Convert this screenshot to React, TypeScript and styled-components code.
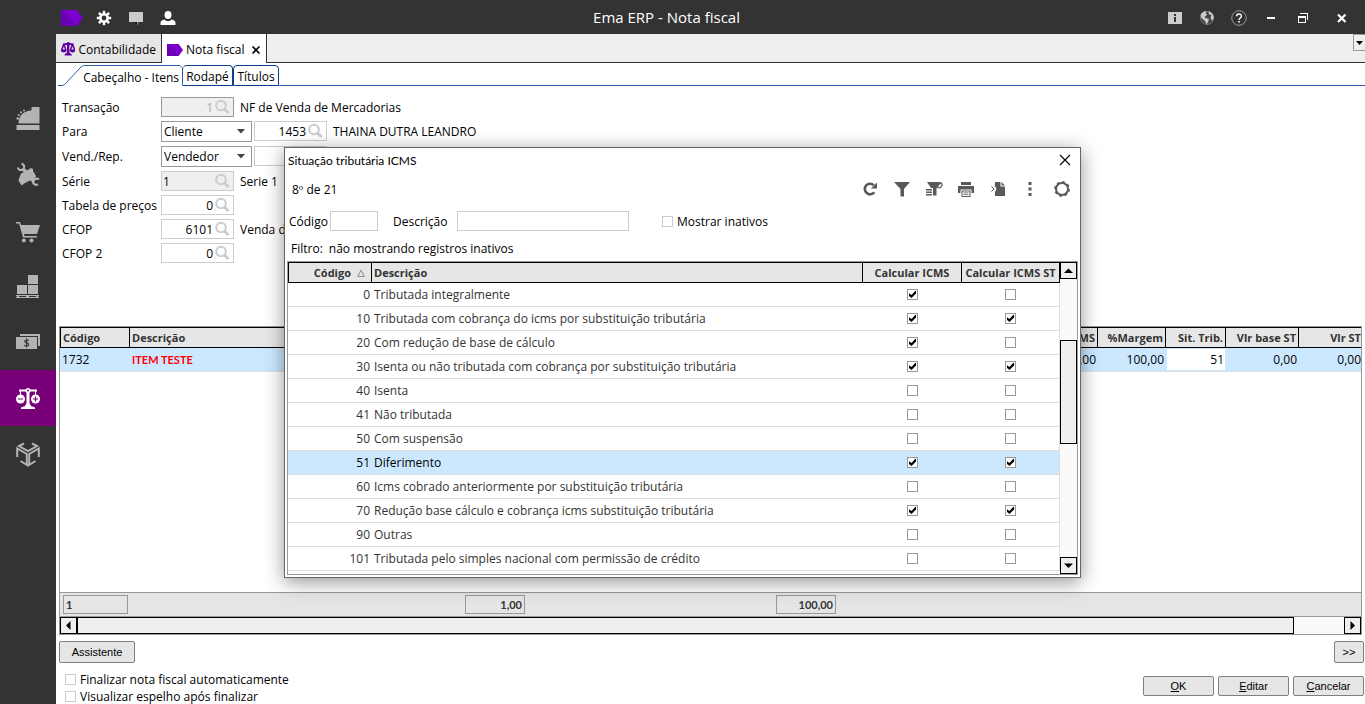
import React, { useState } from "react";
import styled, { createGlobalStyle } from "styled-components";

const GlobalStyle = createGlobalStyle`
  *, *::before, *::after { box-sizing: border-box; }
  body { margin: 0; background: #fff; }
  body, button, input, select, output {
    font-family: "Open Sans", "Liberation Sans", sans-serif;
    font-size: 12px;
    line-height: 15px;
    color: #000;
  }
  button { cursor: pointer; }
`;

const App_ = styled.div`
  position: relative;
  display: flex;
  flex-direction: column;
  min-height: 100vh;
  overflow: hidden;
`;

/* ---------- title bar ---------- */

const TitleBar = styled.header`
  display: flex;
  height: 34px;
  padding-left: 56px;
  background: #333;
`;

const BarButton = styled.button<{ $width?: number }>`
  display: flex;
  align-items: center;
  justify-content: center;
  width: ${(p) => p.$width ?? 32}px;
  height: 34px;
  padding: 2px 0 0;
  border: 0;
  background: none;
`;

const WindowTitle = styled.h1`
  flex: 1;
  margin: 0;
  padding-right: 10px;
  color: #fff;
  font-size: 15px;
  font-weight: 400;
  line-height: 35px;
  text-align: center;
`;

/* ---------- side navigation ---------- */

const Body = styled.div`
  display: flex;
  flex: 1;
`;

const SideNav = styled.nav`
  flex: none;
  width: 56px;
  padding-top: 56px;
  background: #333;
`;

const SideButton = styled.button<{ $active?: boolean }>`
  display: flex;
  align-items: center;
  justify-content: center;
  width: 56px;
  height: 56px;
  padding: 0;
  border: 0;
  background: ${(p) => (p.$active ? "#780078" : "none")};
  color: ${(p) => (p.$active ? "#fff" : "#b3b3b3")};
`;

const Main = styled.main`
  display: flex;
  flex: 1;
  flex-direction: column;
  min-width: 0;
`;

/* ---------- document tabs ---------- */

const DocTabs = styled.div`
  display: flex;
  height: 29px;
  border-bottom: 1px solid #333;
  background: #efefef;
`;

const DocTab = styled.div<{ $active?: boolean; $width: number }>`
  display: flex;
  align-items: center;
  gap: 3px;
  width: ${(p) => p.$width}px;
  height: ${(p) => (p.$active ? 29 : 28)}px;
  padding: 2px 5px 0;
  border-right: 1px solid #333;
  background: ${(p) => (p.$active ? "#fff" : "#e6e6e6")};
`;

const PlainButton = styled.button`
  display: flex;
  align-items: center;
  padding: 0;
  border: 0;
  background: none;
  white-space: nowrap;
`;

const TabClose = styled(PlainButton)`
  margin-left: auto;
`;

const TabsMenu = styled.button`
  display: flex;
  align-items: center;
  justify-content: center;
  width: 12px;
  height: 17px;
  margin-left: auto;
  padding: 0;
  border: 1px solid #999;
  border-right: 0;
  background: #efefef;
`;

/* ---------- page tabs ---------- */

const PageTabs = styled.div`
  display: flex;
  height: 23px;
  padding: 2px 0 0 2px;
`;

const ActivePageTab = styled.button`
  position: relative;
  width: 125px;
  height: 21px;
  padding: 3px 4px 0 0;
  border: 0;
  background: none;
  text-align: right;
  white-space: nowrap;
  svg {
    position: absolute;
    inset: 0;
  }
`;

const PageTab = styled.button<{ $width: number }>`
  width: ${(p) => p.$width}px;
  height: 21px;
  padding: 2px 0 0;
  border: 1px solid #0b3d91;
  border-left-width: ${(p) => (p.$width > 48 ? 0 : 1)}px;
  border-radius: 4px 4px 0 0;
  background: #fff;
  text-align: center;
`;

const PageTabsLine = styled.div`
  flex: 1;
  border-bottom: 1px solid #2f5fa8;
`;

/* ---------- header form ---------- */

const Form = styled.form`
  padding: 11px 6px 59px;
`;

const FormRow = styled.div<{ $height?: number }>`
  display: flex;
  height: ${(p) => p.$height ?? 24}px;
`;

const FormLabel = styled.label`
  width: 99px;
  padding-top: 3px;
  white-space: nowrap;
`;

const SearchBox = styled.span<{ $tone?: "locked" | "readonly" }>`
  display: flex;
  flex: none;
  align-items: center;
  width: 73px;
  height: 20px;
  padding-right: 2px;
  border: 1px solid ${(p) => (p.$tone === "locked" ? "#999" : "#ccc")};
  background: ${(p) => (p.$tone ? "#efefef" : "#fff")};
`;

const SearchInput = styled.input<{ $left?: boolean; $dim?: boolean }>`
  width: 52px;
  padding: 0 1px;
  border: 0;
  outline: 0;
  background: none;
  color: ${(p) => (p.$dim ? "#b0a8a0" : "#000")};
  text-align: ${(p) => (p.$left ? "left" : "right")};
`;

const SearchButton = styled(PlainButton)`
  flex: none;
  width: 16px;
`;

const RowText = styled.span`
  padding: 3px 0 0 6px;
  white-space: nowrap;
`;

const SelectBox = styled.span`
  position: relative;
  flex: none;
  width: 90px;
  height: 21px;
  margin-right: 3px;
  svg {
    position: absolute;
    top: 8px;
    right: 6px;
    pointer-events: none;
  }
`;

const Select = styled.select`
  width: 91px;
  height: 21px;
  padding: 0 2px;
  border: 1px solid #999;
  border-radius: 0;
  background: #fff;
  appearance: none;
`;

/* ---------- data grids ---------- */

const Grid = styled.section`
  display: flex;
  flex: 1;
  flex-direction: column;
  margin: 0 3px;
  border: 1px solid #999;
  overflow: hidden;
`;

const GridBody = styled.div`
  flex: 1;
`;

const Table = styled.table`
  width: 100%;
  border-collapse: separate;
  border-spacing: 0;
  table-layout: fixed;
`;

const Th = styled.th<{ $align?: string; $width?: number }>`
  width: ${(p) => (p.$width ? `${p.$width}px` : "auto")};
  height: 21px;
  padding: 0 2px;
  border: solid #000;
  border-width: 1px 1px 1px 0;
  background: #e6e6e6;
  color: #333;
  font-family: "Open Sans", "Liberation Sans", sans-serif;
  font-size: 11px;
  font-weight: 700;
  text-align: ${(p) => p.$align ?? "left"};
  white-space: nowrap;
  &:first-child { border-left-width: 1px; }
`;

const ItemTh = styled(Th)`
  &:last-child { border-right: 0; padding-right: 0; }
`;

const ItemTd = styled.td<{ $align?: string; $editing?: boolean; $alert?: boolean }>`
  height: 24px;
  padding: 0 2px;
  border-bottom: 1px solid #ddd;
  background: ${(p) => (p.$editing ? "#fff" : "#cce8ff")};
  box-shadow: ${(p) => (p.$editing ? "inset 1px 1px 0 #cce8ff, inset -1px -1px 0 #cce8ff" : "none")};
  color: ${(p) => (p.$alert ? "#f00" : "#000")};
  text-align: ${(p) => p.$align ?? "left"};
  white-space: nowrap;
  &:last-child { padding-right: 0; }
  strong {
    font-family: Lato, "Liberation Sans", sans-serif;
    font-size: 11px;
  }
`;

const Totals = styled.div`
  display: flex;
  align-items: center;
  height: 25px;
  padding: 0 3px;
  border: solid #999;
  border-width: 1px 0;
  background: #e5e5e5;
`;

const Total = styled.output<{ $width: number; $gap?: number; $align?: string }>`
  width: ${(p) => p.$width}px;
  height: 19px;
  margin-left: ${(p) => p.$gap ?? 0}px;
  padding: 1px 2px;
  border: 1px solid #999;
  color: #333;
  font-family: Lato, "Liberation Sans", sans-serif;
  font-size: 11px;
  font-weight: 700;
  text-align: ${(p) => p.$align ?? "right"};
`;

const trackPattern = "repeating-conic-gradient(#f4f4f4 0 25%, #fff 0 50%) 0 0 / 2px 2px";

const HScroll = styled.div`
  display: flex;
  height: 17px;
  background: ${trackPattern};
`;

const VScroll = styled.div`
  display: flex;
  flex: none;
  flex-direction: column;
  width: 17px;
  background: ${trackPattern};
`;

const ScrollArrow = styled.button`
  display: flex;
  flex: none;
  align-items: center;
  justify-content: center;
  width: 17px;
  height: 17px;
  padding: 0;
  border: 1px solid #000;
  background: #efefef;
`;

const HThumb = styled.div`
  flex: 1;
  margin-right: 50px;
  border: 1px solid #000;
  background: #efefef;
`;

const VThumb = styled.div`
  height: 104px;
  margin: 61px 0 auto;
  border: 1px solid #000;
  background: #efefef;
`;

/* ---------- footer ---------- */

const ActionRow = styled.div`
  display: flex;
  justify-content: space-between;
  padding: 6px 1px 0 3px;
`;

const PushButton = styled.button<{ $width: number; $height?: number }>`
  width: ${(p) => p.$width}px;
  height: ${(p) => p.$height ?? 22}px;
  padding: 0;
  border: 1px solid #808080;
  border-radius: 2px;
  background: #e6e6e6;
  font-family: "Liberation Sans", Arial, sans-serif;
  font-size: 11px;
`;

const FooterRow = styled.footer`
  display: flex;
  align-items: flex-end;
  justify-content: space-between;
  padding: 9px 1px 0 9px;
`;

const CheckList = styled.div`
  display: flex;
  flex-direction: column;
  gap: 2px;
`;

const CheckLabel = styled.label`
  display: flex;
  align-items: center;
  gap: 4px;
  height: 15px;
  white-space: nowrap;
`;

const Check = styled.input<{ $light?: boolean }>`
  display: block;
  flex: none;
  width: 11px;
  height: 11px;
  margin: 0;
  border: 1px solid ${(p) => (p.$light ? "#ccc" : "#999")};
  background: #fff;
  appearance: none;
  &:checked::before {
    content: "";
    display: block;
    width: 9px;
    height: 9px;
    background: #000;
    clip-path: polygon(11% 36%, 39% 56%, 82% 8%, 89% 12%, 89% 40%, 39% 88%, 11% 66%);
  }
`;

const Buttons = styled.div`
  display: flex;
  gap: 4px;
  padding-bottom: 8px;
`;

/* ---------- lookup dialog ---------- */

const Overlay = styled.div`
  position: absolute;
  inset: 0;
  display: flex;
  align-items: flex-start;
  justify-content: center;
  padding-top: 147px;
  pointer-events: none;
`;

const Dialog = styled.section`
  width: 797px;
  border: 1px solid #666;
  background: #fff;
  box-shadow: 0 4px 18px rgba(0, 0, 0, 0.42);
  pointer-events: auto;
`;

const DialogTitle = styled.div`
  display: flex;
  align-items: center;
  justify-content: space-between;
  height: 24px;
  padding: 0 9px 0 3px;
  h2 {
    margin: 0;
    font-family: Lato, "Liberation Sans", sans-serif;
    font-size: 12px;
    font-weight: 400;
  }
`;

const Toolbar = styled.div`
  display: flex;
  align-items: center;
  justify-content: space-between;
  height: 34px;
  padding: 0 2px 0 7px;
`;

const Tools = styled.div`
  display: flex;
`;

const Tool = styled(PlainButton)`
  justify-content: center;
  width: 32px;
  height: 32px;
  color: #595959;
`;

const Filters = styled.form`
  display: flex;
  align-items: center;
  height: 30px;
  padding-left: 4px;
`;

const FilterField = styled.label<{ $label: number; $gap: number }>`
  display: flex;
  align-items: center;
  margin-right: ${(p) => p.$gap}px;
  span { width: ${(p) => p.$label}px; white-space: nowrap; }
`;

const FilterInput = styled.input<{ $width: number }>`
  width: ${(p) => p.$width}px;
  height: 20px;
  border: 1px solid #ccc;
  border-radius: 0;
`;

const FilterNote = styled.p`
  display: flex;
  gap: 6px;
  align-items: center;
  height: 25px;
  margin: 0;
  padding-left: 6px;
`;

const DialogGrid = styled.div`
  display: flex;
  margin: 0 2px 2px;
  border: 1px solid #999;
`;

const DialogTable = styled.div`
  flex: 1;
  padding-bottom: 3px;
`;

const SortHead = styled.span`
  display: flex;
  align-items: center;
  justify-content: flex-end;
  gap: 6px;
  padding-right: 4px;
`;

const LookupRow = styled.tr<{ $selected?: boolean }>`
  background: ${(p) => (p.$selected ? "#cce8ff" : "#fff")};
  color: ${(p) => (p.$selected ? "#000" : "#333")};
`;

const LookupTd = styled.td<{ $align?: string }>`
  height: 24px;
  padding: 0 2px;
  border-bottom: 1px solid #ddd;
  text-align: ${(p) => p.$align ?? "left"};
  white-space: nowrap;
  &:last-child { border-right: 1px solid #ddd; }
  input { margin: 0 auto; }
`;

/* ---------- icons ---------- */

const TagIcon = ({ width = 22, height = 16 }: { width?: number; height?: number }) => (
  <svg width={width} height={height} viewBox="0 0 22 16" preserveAspectRatio="none">
    <path d="M0 0H16L22 8L16 16H0Z" fill="#7a00cc" />
    <path d="M0 0L16 16H0Z" fill="#6a00b3" />
  </svg>
);

const GearIcon = () => (
  <svg width="16" height="16" viewBox="0 0 16 16">
    <g fill="#fff">
      {[0, 45, 90, 135].map((a) => (
        <rect key={a} x="6.8" y="0.800" width="2.400" height="14.400" transform={`rotate(${a} 8 8)`} />
      ))}
      <circle cx="8" cy="8" r="5" />
    </g>
    <circle cx="8" cy="8" r="2.4" fill="#333" />
  </svg>
);

const ChatIcon = () => (
  <svg width="16" height="14" viewBox="0 0 16 14">
    <path d="M1 1H15V11H10.500L9.500 14L6.500 11H1Z" fill="#ccc" />
    <path d="M6 11H9.500L9 14Z" fill="#111" />
  </svg>
);

const UserIcon = () => (
  <svg width="16" height="16" viewBox="0 0 16 16" fill="#fff">
    <ellipse cx="8" cy="5" rx="3.500" ry="4" />
    <path d="M0.500 15V12.500C0.500 11 2 10.300 4.500 9.500C6.500 11.800 9.500 11.800 11.500 9.500C14 10.300 15.500 11 15.500 12.500V15Z" />
  </svg>
);

const InfoIcon = () => (
  <svg width="14" height="12" viewBox="0 0 14 12">
    <rect width="14" height="12" fill="#ccc" />
    <path d="M6 2H8V4H6ZM6 5H8V10H6Z" fill="#333" />
  </svg>
);

const GlobeIcon = () => (
  <svg width="16" height="16" viewBox="0 0 16 16">
    <circle cx="8" cy="8" r="6.500" fill="#444" stroke="#777" />
    <path d="M1.500 5C3 2 5 1 7.500 1L6.500 3L8 4L7 6L5 7L8 8.500L10 9L9 12L7.500 14.500L6 11L2.500 8Z" fill="#ccc" />
    <path d="M9.500 1.200C13 2 15 5 14.700 8L13 11L11.500 7.500L12.500 5L10 4.500Z" fill="#ccc" />
  </svg>
);

const HelpIcon = () => (
  <svg width="18" height="18" viewBox="0 0 18 18" fill="none">
    <circle cx="9" cy="9" r="7.300" stroke="#999" />
    <path d="M6.600 7.200C6.600 4.200 11.400 4.200 11.400 7.200C11.400 9 9 9 9 11" stroke="#fff" strokeWidth="1.400" />
    <rect x="8.200" y="12" width="1.600" height="1.600" fill="#fff" />
  </svg>
);

const MinimizeIcon = () => (
  <svg width="10" height="10" viewBox="0 0 10 10">
    <rect x="1" y="4" width="8" height="2" fill="#fff" />
  </svg>
);

const RestoreIcon = () => (
  <svg width="10" height="10" viewBox="0 0 10 10" fill="none" stroke="#fff" shapeRendering="crispEdges">
    <path d="M0 3.500H7.500V9.500H0.500V3M0 4.500H7M2 0.500H9.500V7" />
  </svg>
);

const CloseIcon = () => (
  <svg width="10" height="10" viewBox="0 0 10 10" stroke="#fff" strokeWidth="2.200">
    <path d="M1 1.500L8.500 9M8.500 1.500L1 9" />
  </svg>
);

const TabCloseIcon = () => (
  <svg width="10" height="10" viewBox="0 0 10 10" stroke="#000" strokeWidth="1.600">
    <path d="M1.500 1.500L8.500 8.500M8.500 1.500L1.500 8.500" />
  </svg>
);

const ThinCloseIcon = () => (
  <svg width="12" height="12" viewBox="0 0 12 12" stroke="#000" strokeWidth="1.100">
    <path d="M1 1L11 11M11 1L1 11" />
  </svg>
);

const ArrowIcon = ({ dir }: { dir: "up" | "down" | "left" | "right" }) => {
  const d = {
    up: "M0 7H9L4.500 2.500Z",
    down: "M0 2.500H9L4.500 7Z",
    left: "M6.500 0V9L2 4.500Z",
    right: "M2.500 0V9L7 4.500Z",
  }[dir];
  return (
    <svg width="9" height="9" viewBox="0 0 9 9">
      <path d={d} />
    </svg>
  );
};

const SelectArrow = () => (
  <svg width="8" height="5" viewBox="0 0 8 5">
    <path d="M0 0H8L4 4.500Z" fill="#444" />
  </svg>
);

const MenuArrow = () => (
  <svg width="7" height="4" viewBox="0 0 7 4">
    <path d="M0 0H7L3.500 4Z" />
  </svg>
);

const SearchIcon = () => (
  <svg width="16" height="16" viewBox="0 0 16 16" fill="none" stroke="#ccc">
    <circle cx="7" cy="6.500" r="4.800" strokeWidth="2" />
    <path d="M10.500 10L14.500 14" strokeWidth="2.600" />
  </svg>
);

const SmallScaleIcon = () => (
  <svg width="16" height="16" viewBox="0 0 24 24" fill="#5f00a3">
    <path d="M10 4H14V18L18 21V23H6V21L10 18Z" />
    <circle cx="12" cy="3.500" r="3" />
    <path d="M3 3L10 2H14L21 3V6L13 5H11L3 6Z" />
    <path d="M3 5H6.500L9.500 14C8.500 19 0.500 19 -0.500 14ZM17.500 5H21L24.500 14C23.500 19 15.500 19 14.500 14Z" />
    <path d="M4.700 8L6.700 13H2.700ZM19.300 8L21.300 13H17.300Z" fill="#e6e6e6" />
  </svg>
);

const RegisterIcon = () => (
  <svg width="24" height="24" viewBox="0 0 24 24" fill="currentColor">
    <path d="M2.500 17.500C2.500 9.500 8 4.500 15.500 4.500V1H23.500V17.500Z" />
    <rect x="0.500" y="19" width="23" height="5" />
    <circle cx="1.700" cy="12.500" r="1.200" />
    <circle cx="2.700" cy="9" r="1.100" />
    <circle cx="5" cy="6.300" r="1.100" />
    <circle cx="8" cy="4.500" r="1" />
  </svg>
);

const ToolsIcon = () => (
  <svg width="24" height="24" viewBox="0 0 24 24">
    <path d="M10 9L15 6L17 7V9L20 14L19 16L8 21.500L6 23.500L3.500 20.500L2.500 18L5 11.500Z" fill="currentColor" />
    <path d="M5.500 1.800C8 2 9 5 7.500 7C5.500 9 2.500 8.200 1.800 5.500" fill="none" stroke="currentColor" strokeWidth="2.200" />
    <path d="M6.500 6.500L11 11" stroke="currentColor" strokeWidth="3.400" />
    <path d="M23 17.500C20.500 15.500 17 17 17 20C17.300 22.500 20 23.500 22 22.300" fill="none" stroke="currentColor" strokeWidth="2.200" />
    <path d="M14 16L18 20" stroke="currentColor" strokeWidth="3" />
  </svg>
);

const CartIcon = () => (
  <svg width="24" height="26" viewBox="0 -4 24 26" fill="currentColor">
    <path d="M0 1H4L5 4H24L21 13H8L8.500 15H21V16.500H7L3 2.500H0Z" />
    <circle cx="7.800" cy="19.500" r="2" />
    <circle cx="15.500" cy="19.500" r="2" />
  </svg>
);

const BoxesIcon = () => (
  <svg width="24" height="24" viewBox="0 0 24 24" fill="currentColor">
    <path d="M12 1H22V10H12ZM1 11H11V20H1ZM12 11H22V20H12ZM0 21H23V22H0ZM1 22H3V23H1ZM10 22H13V23H10ZM20 22H22V23H20ZM0 23H23V24H0Z" />
  </svg>
);

const MoneyIcon = () => (
  <svg width="24" height="16" viewBox="0 0 24 16">
    <path d="M4 0H24V12H22V2H4ZM0 3H21V15H0Z" fill="currentColor" />
    <path d="M12.800 6.500C12 5.500 8.500 5.700 8.500 7.300C8.500 9.500 12.700 8.300 12.700 10.500C12.700 12.300 9 12.400 8 11.200M10.600 4.500V13.500" fill="none" stroke="#333" strokeWidth="1.100" />
  </svg>
);

const ScaleIcon = () => (
  <svg width="24" height="24" viewBox="0 -1 24 24" fill="currentColor">
    <path d="M10.500 4H13.500V16L15 19L19 20.500V22H5V20.500L9 19L10.500 16Z" />
    <circle cx="12" cy="3.500" r="2.500" />
    <circle cx="12" cy="3.500" r="1" fill="#780078" />
    <path d="M3 2.500H10V4.500H3ZM14 2.500H21V4.500H14ZM4 4H5V8H4ZM19 4H20V8H19Z" />
    <circle cx="4.500" cy="12" r="4.500" />
    <circle cx="19.500" cy="12" r="4.500" />
    <path d="M2 12H7M17 12H22M19.500 9.500V14.500" stroke="#780078" strokeWidth="1.200" />
  </svg>
);

const CubeIcon = () => (
  <svg width="24" height="26" viewBox="0 0 24 26" fill="none" stroke="currentColor" strokeWidth="2">
    <path d="M8 2.500L3 5L12 10L21 5L16 2.500" />
    <path d="M1.200 16V7.500L10.800 13V24M22.800 16V7.500L13.200 13V24" />
    <path d="M4.500 20L12 24.500L19.500 20" />
  </svg>
);

const RefreshIcon = () => (
  <svg width="16" height="16" viewBox="0 0 16 16" fill="none">
    <path d="M12.300 11.300A5.300 5.300 0 1 1 11.800 4.200" stroke="currentColor" strokeWidth="2.600" />
    <path d="M15 1.500V7.500H9Z" fill="currentColor" />
  </svg>
);

const FunnelIcon = () => (
  <svg width="16" height="16" viewBox="0 0 16 16" fill="currentColor">
    <path d="M0 1H16L10 8V15.500H6.500V8Z" />
  </svg>
);

const FilterListIcon = () => (
  <svg width="17" height="16" viewBox="0 0 17 16">
    <path d="M1 1H15L10.500 7V14.500H7V7H5Z" fill="currentColor" />
    <path d="M0 8H6V9.500H0ZM0 10.500H6V12H0ZM0 13H6V14.500H0Z" fill="currentColor" />
    <path d="M11.500 6.500L12.500 3.500L15.500 2L16.300 4L14 6.800Z" fill="#fff" stroke="currentColor" strokeWidth="1.200" />
  </svg>
);

const PrinterIcon = () => (
  <svg width="16" height="16" viewBox="0 0 16 16" fill="currentColor">
    <path d="M3 1H13V4H3ZM0 5H16V12H13.500V8.500H2.500V12H0ZM3.500 9.500H12.500V16H3.500Z" />
    <path d="M4.500 10.500H11.500V15H4.500Z" fill="#fff" />
    <path d="M5.500 11.500H10.500V12.300H5.500ZM5.500 13.200H10.500V14H5.500Z" />
  </svg>
);

const ExportIcon = () => (
  <svg width="16" height="16" viewBox="0 0 16 16">
    <path d="M5 1H10.500V5.500H15V15H5V11L6.500 8L5 5Z" fill="currentColor" />
    <path d="M11.500 1L15 4.500H11.500Z" fill="currentColor" />
    <path d="M1.500 5.500L4 8L1.500 10.500" fill="none" stroke="currentColor" />
  </svg>
);

const DotsIcon = () => (
  <svg width="16" height="16" viewBox="0 0 16 16" fill="currentColor">
    <path d="M6.500 1H9.500V4H6.500ZM6.500 6.500H9.500V9.500H6.500ZM6.500 12H9.500V15H6.500Z" />
  </svg>
);

const RingIcon = () => (
  <svg width="16" height="16" viewBox="0 0 16 16" fill="none" stroke="currentColor">
    <circle cx="8" cy="8" r="6" strokeWidth="2" />
    <circle cx="8" cy="8" r="7.200" strokeWidth="1.400" strokeDasharray="2.800 2.855" />
  </svg>
);

/* ---------- data ---------- */

type Situation = [code: number, description: string, icms: boolean, icmsSt: boolean];

const situations: Situation[] = [
  [0, "Tributada integralmente", true, false],
  [10, "Tributada com cobrança do icms por substituição tributária", true, true],
  [20, "Com redução de base de cálculo", true, false],
  [30, "Isenta ou não tributada com cobrança por substituição tributária", true, true],
  [40, "Isenta", false, false],
  [41, "Não tributada", false, false],
  [50, "Com suspensão", false, false],
  [51, "Diferimento", true, true],
  [60, "Icms cobrado anteriormente por substituição tributária", false, false],
  [70, "Redução base cálculo e cobrança icms substituição tributária", true, true],
  [90, "Outras", false, false],
  [101, "Tributada pelo simples nacional com permissão de crédito", false, false],
];

const sideItems: [string, React.FC][] = [
  ["Caixa", RegisterIcon],
  ["Serviços", ToolsIcon],
  ["Compras", CartIcon],
  ["Estoque", BoxesIcon],
  ["Financeiro", MoneyIcon],
  ["Contabilidade", ScaleIcon],
  ["Produção", CubeIcon],
];

const tools: [string, React.FC][] = [
  ["Atualizar", RefreshIcon],
  ["Filtrar", FunnelIcon],
  ["Filtro avançado", FilterListIcon],
  ["Imprimir", PrinterIcon],
  ["Exportar", ExportIcon],
  ["Mais", DotsIcon],
  ["Configurações", RingIcon],
];

interface SearchFieldProps {
  id: string;
  value: string;
  label?: string;
  tone?: "locked" | "readonly";
  left?: boolean;
}

const SearchField = ({ id, value, label, tone, left }: SearchFieldProps) => (
  <SearchBox $tone={tone}>
    <SearchInput id={id} aria-label={label} defaultValue={value} readOnly={!!tone} $left={left} $dim={tone === "locked"} />
    <SearchButton type="button" aria-label="Pesquisar">
      <SearchIcon />
    </SearchButton>
  </SearchBox>
);

const LookupDialog = () => {
  const [selected, setSelected] = useState(51);
  return (
    <Overlay>
      <Dialog role="dialog" aria-label="Situação tributária ICMS">
        <DialogTitle>
          <h2>Situação tributária ICMS</h2>
          <PlainButton aria-label="Fechar">
            <ThinCloseIcon />
          </PlainButton>
        </DialogTitle>
        <Toolbar>
          <span>8º de 21</span>
          <Tools>
            {tools.map(([name, Icon]) => (
              <Tool key={name} aria-label={name}>
                <Icon />
              </Tool>
            ))}
          </Tools>
        </Toolbar>
        <Filters>
          <FilterField $label={41} $gap={15}>
            <span>Código</span>
            <FilterInput $width={48} />
          </FilterField>
          <FilterField $label={64} $gap={33}>
            <span>Descrição</span>
            <FilterInput $width={172} />
          </FilterField>
          <CheckLabel>
            <Check type="checkbox" $light />
            Mostrar inativos
          </CheckLabel>
        </Filters>
        <FilterNote>
          <span>Filtro:</span>
          <span>não mostrando registros inativos</span>
        </FilterNote>
        <DialogGrid>
          <DialogTable>
            <Table>
              <thead>
                <tr>
                  <Th $width={84}>
                    <SortHead>
                      Código
                      <svg width="8" height="8" viewBox="0 0 8 8" fill="none" stroke="#888">
                        <path d="M4 1L7.300 7.500H0.700Z" />
                      </svg>
                    </SortHead>
                  </Th>
                  <Th>Descrição</Th>
                  <Th $width={99} $align="center">Calcular ICMS</Th>
                  <Th $width={98} $align="center">Calcular ICMS ST</Th>
                </tr>
              </thead>
              <tbody>
                {situations.map(([code, description, icms, icmsSt]) => (
                  <LookupRow key={code} $selected={code === selected} onClick={() => setSelected(code)}>
                    <LookupTd $align="right">{code}</LookupTd>
                    <LookupTd>{description}</LookupTd>
                    <LookupTd>
                      <Check type="checkbox" aria-label={`Calcular ICMS ${code}`} defaultChecked={icms} />
                    </LookupTd>
                    <LookupTd>
                      <Check type="checkbox" aria-label={`Calcular ICMS ST ${code}`} defaultChecked={icmsSt} />
                    </LookupTd>
                  </LookupRow>
                ))}
              </tbody>
            </Table>
          </DialogTable>
          <VScroll>
            <ScrollArrow aria-label="Subir"><ArrowIcon dir="up" /></ScrollArrow>
            <VThumb />
            <ScrollArrow aria-label="Descer"><ArrowIcon dir="down" /></ScrollArrow>
          </VScroll>
        </DialogGrid>
      </Dialog>
    </Overlay>
  );
};

export default function App() {
  return (
    <App_>
      <GlobalStyle />
      <TitleBar>
        <BarButton aria-label="Início"><TagIcon /></BarButton>
        <BarButton aria-label="Configurações"><GearIcon /></BarButton>
        <BarButton aria-label="Mensagens"><ChatIcon /></BarButton>
        <BarButton aria-label="Usuário"><UserIcon /></BarButton>
        <WindowTitle>Ema ERP - Nota fiscal</WindowTitle>
        <BarButton aria-label="Informações"><InfoIcon /></BarButton>
        <BarButton aria-label="Site"><GlobeIcon /></BarButton>
        <BarButton aria-label="Ajuda"><HelpIcon /></BarButton>
        <BarButton aria-label="Minimizar"><MinimizeIcon /></BarButton>
        <BarButton aria-label="Restaurar"><RestoreIcon /></BarButton>
        <BarButton aria-label="Fechar janela" $width={46}><CloseIcon /></BarButton>
      </TitleBar>
      <Body>
        <SideNav>
          {sideItems.map(([name, Icon]) => (
            <SideButton key={name} aria-label={name} $active={name === "Contabilidade"}>
              <Icon />
            </SideButton>
          ))}
        </SideNav>
        <Main>
          <DocTabs>
            <DocTab $width={106}>
              <SmallScaleIcon />
              <PlainButton>Contabilidade</PlainButton>
            </DocTab>
            <DocTab $active $width={105}>
              <TagIcon width={16} height={12} />
              <PlainButton>Nota fiscal</PlainButton>
              <TabClose aria-label="Fechar aba"><TabCloseIcon /></TabClose>
            </DocTab>
            <TabsMenu aria-label="Lista de abas"><MenuArrow /></TabsMenu>
          </DocTabs>
          <PageTabs>
            <ActivePageTab>
              <svg width="125" height="21" viewBox="0 0 125 21" fill="none" stroke="#2f5fa8">
                <path d="M0 20.500H4C6 20.500 7 19 8 18L22 3C23.500 1.300 25 0.500 27 0.500H122L124.500 3V20.500" />
              </svg>
              Cabeçalho - Itens
            </ActivePageTab>
            <PageTab $width={50}>Rodapé</PageTab>
            <PageTab $width={46}>Títulos</PageTab>
            <PageTabsLine />
          </PageTabs>
          <Form>
            <FormRow>
              <FormLabel htmlFor="transacao">Transação</FormLabel>
              <SearchField id="transacao" value="1" tone="locked" />
              <RowText>NF de Venda de Mercadorias</RowText>
            </FormRow>
            <FormRow $height={25}>
              <FormLabel htmlFor="para">Para</FormLabel>
              <SelectBox>
                <Select id="para"><option>Cliente</option></Select>
                <SelectArrow />
              </SelectBox>
              <SearchField id="cliente" label="Código do cliente" value="1453" />
              <RowText>THAINA DUTRA LEANDRO</RowText>
            </FormRow>
            <FormRow $height={25}>
              <FormLabel htmlFor="vendrep">Vend./Rep.</FormLabel>
              <SelectBox>
                <Select id="vendrep"><option>Vendedor</option></Select>
                <SelectArrow />
              </SelectBox>
              <SearchField id="vendedor" label="Código do vendedor" value="" />
            </FormRow>
            <FormRow>
              <FormLabel htmlFor="serie">Série</FormLabel>
              <SearchField id="serie" value="1" tone="readonly" left />
              <RowText>Serie 1</RowText>
            </FormRow>
            <FormRow>
              <FormLabel htmlFor="tabela">Tabela de preços</FormLabel>
              <SearchField id="tabela" value="0" />
            </FormRow>
            <FormRow>
              <FormLabel htmlFor="cfop">CFOP</FormLabel>
              <SearchField id="cfop" value="6101" />
              <RowText>Venda de</RowText>
            </FormRow>
            <FormRow>
              <FormLabel htmlFor="cfop2">CFOP 2</FormLabel>
              <SearchField id="cfop2" value="0" />
            </FormRow>
          </Form>
          <Grid>
            <GridBody>
              <Table>
                <thead>
                  <tr>
                    <ItemTh $width={70}>Código</ItemTh>
                    <ItemTh>Descrição</ItemTh>
                    <ItemTh $width={80} $align="right">ICMS</ItemTh>
                    <ItemTh $width={68} $align="right">%Margem</ItemTh>
                    <ItemTh $width={60} $align="right">Sit. Trib.</ItemTh>
                    <ItemTh $width={73} $align="right">Vlr base ST</ItemTh>
                    <ItemTh $width={62} $align="right">Vlr ST</ItemTh>
                  </tr>
                </thead>
                <tbody>
                  <tr>
                    <ItemTd>1732</ItemTd>
                    <ItemTd $alert><strong>ITEM TESTE</strong></ItemTd>
                    <ItemTd $align="right">0,00</ItemTd>
                    <ItemTd $align="right">100,00</ItemTd>
                    <ItemTd $align="right" $editing>51</ItemTd>
                    <ItemTd $align="right">0,00</ItemTd>
                    <ItemTd $align="right">0,00</ItemTd>
                  </tr>
                </tbody>
              </Table>
            </GridBody>
            <Totals>
              <Total $width={65} $align="left">1</Total>
              <Total $width={60} $gap={337}>1,00</Total>
              <Total $width={60} $gap={251}>100,00</Total>
            </Totals>
            <HScroll>
              <ScrollArrow aria-label="Rolar à esquerda"><ArrowIcon dir="left" /></ScrollArrow>
              <HThumb />
              <ScrollArrow aria-label="Rolar à direita"><ArrowIcon dir="right" /></ScrollArrow>
            </HScroll>
          </Grid>
          <ActionRow>
            <PushButton $width={76}>Assistente</PushButton>
            <PushButton $width={30}>&gt;&gt;</PushButton>
          </ActionRow>
          <FooterRow>
            <CheckList>
              <CheckLabel><Check type="checkbox" $light />Finalizar nota fiscal automaticamente</CheckLabel>
              <CheckLabel><Check type="checkbox" $light />Visualizar espelho após finalizar</CheckLabel>
            </CheckList>
            <Buttons>
              <PushButton $width={71} $height={20}><u>O</u>K</PushButton>
              <PushButton $width={71} $height={20}><u>E</u>ditar</PushButton>
              <PushButton $width={71} $height={20}><u>C</u>ancelar</PushButton>
            </Buttons>
          </FooterRow>
        </Main>
      </Body>
      <LookupDialog />
    </App_>
  );
}
